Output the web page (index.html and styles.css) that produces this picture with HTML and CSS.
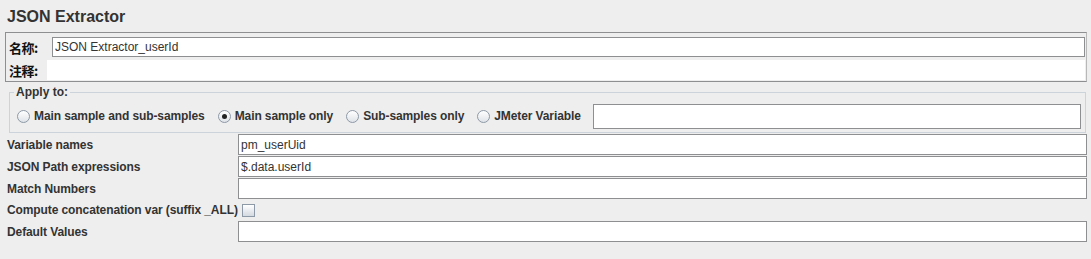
FILE: index.html
```html
<!DOCTYPE html>
<html lang="en">
<head>
  <meta charset="UTF-8">
  <title>JSON Extractor</title>
  <link rel="stylesheet" href="styles.css">
</head>
<body>
  <h1 class="title">JSON Extractor</h1>

  <div class="name-box">
    <div class="name-row">
      <span class="name-label">名称:</span>
      <input type="text" class="field name-field" value="JSON Extractor_userId">
    </div>
    <div class="name-row">
      <span class="name-label comment-label">注释:</span>
      <div class="comment-field"></div>
    </div>
  </div>

  <fieldset class="apply">
    <legend>Apply to:</legend>
    <div class="radios">
      <label class="radio"><span class="dot"></span>Main sample and sub-samples</label>
      <label class="radio"><span class="dot checked"></span>Main sample only</label>
      <label class="radio"><span class="dot"></span>Sub-samples only</label>
      <label class="radio"><span class="dot"></span>JMeter Variable</label>
      <input type="text" class="field var-field">
    </div>
  </fieldset>

  <div class="params">
    <span class="label">Variable names</span>
    <input type="text" class="field" value="pm_userUid">

    <span class="label">JSON Path expressions</span>
    <input type="text" class="field" value="$.data.userId">

    <span class="label">Match Numbers</span>
    <input type="text" class="field">

    <span class="label check-label">Compute concatenation var (suffix _ALL)<span class="checkbox"></span></span>

    <span class="label">Default Values</span>
    <input type="text" class="field">
  </div>
</body>
</html>
```

FILE: styles.css
```css
body {
  margin: 0;
  background-color: #eeeeee;
  font-family: 'Liberation Sans', Arial, sans-serif;
  font-size: 12px;
  color: #333;
}

* {
  box-sizing: border-box;
}

.title {
  font-size: 16px;
  font-weight: bold;
  line-height: 20px;
  margin: 7px 0 5px 7px;
  color: #333;
}

.field {
  display: block;
  height: 21px;
  margin: 0;
  padding: 0 2px;
  font-family: 'Liberation Sans', Arial, sans-serif;
  font-size: 12px;
  color: #333;
  background-color: #fff;
  border: 1px solid #8e8f91;
  border-radius: 0;
  outline: none;
}

/* name / comment box */
.name-box {
  margin: 0 4px 0 5px;
  padding: 4px 1px 0 0;
  height: 50px;
  border: 1px solid #8e8f91;
  border-right-color: #b8b8b8;
}

.name-row {
  display: flex;
  align-items: center;
  height: 20px;
  margin-bottom: 3px;
}

.name-label {
  width: 46px;
  padding-left: 3px;
  font-family: 'Noto Sans CJK SC', 'Liberation Sans', sans-serif;
  font-size: 13px;
  font-weight: bold;
  letter-spacing: -0.5px;
  color: #111;
}

.comment-label {
  width: 41px;
}

.name-field {
  flex: 1;
  height: 20px;
}

.comment-field {
  flex: 1;
  height: 20px;
  background-color: #fff;
}

/* apply to */
.apply {
  margin: 3px 5px 0 9px;
  padding: 0 3px 2px 4px;
  border: 1px solid #cdd3da;
  min-width: 0;
}

.apply legend {
  padding: 0 2px;
  font-weight: bold;
  line-height: 14px;
  color: #333;
}

.radios {
  display: flex;
  align-items: center;
  height: 28px;
  margin-top: 3px;
}

.radio {
  display: flex;
  align-items: center;
  font-weight: bold;
  margin-right: 10px;
  letter-spacing: -0.1px;
  white-space: nowrap;
}

.dot {
  position: relative;
  width: 13px;
  height: 13px;
  margin: 0 4px 0 3px;
  border: 1px solid #8d99a6;
  border-radius: 50%;
  background: linear-gradient(#ffffff, #dfe3e8);
}

.dot.checked::after {
  content: "";
  position: absolute;
  left: 3px;
  top: 3px;
  width: 5px;
  height: 5px;
  border-radius: 50%;
  background-color: #222;
}

.var-field {
  flex: 1;
  height: 25px;
  margin-left: 2px;
  margin-right: 1px;
}

/* parameter rows */
.params {
  display: grid;
  grid-template-columns: 238px 1fr;
  row-gap: 1px;
  margin: 1px 4px 0 0;
}

.params .field {
  height: 21px;
}

.label {
  display: flex;
  align-items: center;
  padding-left: 7px;
  height: 21px;
  font-weight: bold;
  letter-spacing: -0.1px;
  color: #333;
  white-space: nowrap;
}

.check-label {
  grid-column: 1 / 3;
  height: 20px;
}

.checkbox {
  display: inline-block;
  width: 13px;
  height: 13px;
  margin-left: 4px;
  border: 1px solid #8d99a6;
  background: linear-gradient(#ffffff, #d4dae1);
}
```
